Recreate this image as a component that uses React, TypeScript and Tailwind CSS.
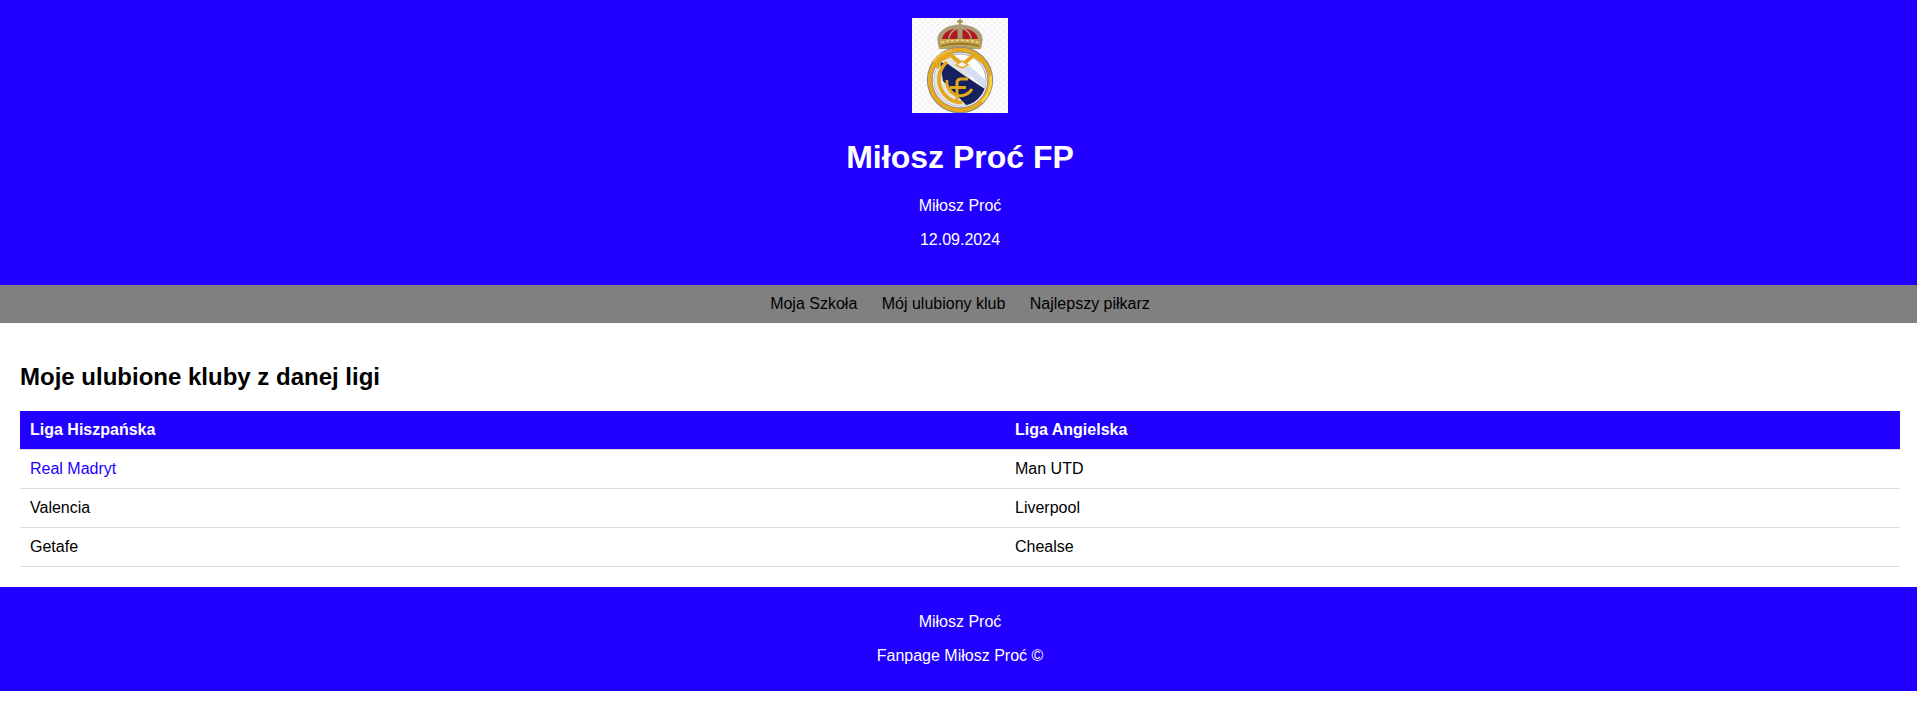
import React from "react";

function Logo() {
  return (
    <svg width="96" height="95" viewBox="0 0 96 95" className="block">
      <defs>
        <filter id="b" x="-5%" y="-5%" width="110%" height="110%"><feGaussianBlur stdDeviation="0.5" /></filter>
        <pattern id="chk" width="6" height="6" patternUnits="userSpaceOnUse">
          <rect width="6" height="6" fill="#fcfcfc" />
          <rect width="3" height="3" fill="#f4f4f4" />
          <rect x="3" y="3" width="3" height="3" fill="#f4f4f4" />
        </pattern>
        <clipPath id="inner"><circle cx="48" cy="62" r="26" /></clipPath>
      </defs>
      <rect width="96" height="95" fill="url(#chk)" />
      <g filter="url(#b)">
        {/* crown */}
        <path d="M48 1v6M45 3.5h6" stroke="#a98c4a" strokeWidth="1.8" fill="none" />
        <path d="M25.5 23 C24 13 36 6.5 48 6.5 C60 6.5 72 13 70.5 23 L69 31 H27 Z" fill="#a99c78" />
        <path d="M30 21 C31 15 37 11 45.5 10.5 V21 Z" fill="#b3161f" />
        <path d="M66 21 C65 15 59 11 50.5 10.5 V21 Z" fill="#b3161f" />
        <path d="M37 21 C37 16 41 12 46 10 M59 21 C59 16 55 12 50 10" fill="none" stroke="#b7a77c" strokeWidth="1.4" />
        <path d="M27.5 21 H68.5 L68 31 C56 27 40 27 28 31 Z" fill="#c9a53f" />
        <path d="M29 24.5 C41 21.5 55 21.5 67 24.5" fill="none" stroke="#e6d9a6" strokeWidth="1.6" strokeDasharray="3 2" />
        <path d="M29 28 C41 25 55 25 67 28" fill="none" stroke="#8f7436" strokeWidth="1.6" />
        <g fill="#7d8a8c">
          <circle cx="37" cy="20" r="1.1" /><circle cx="48" cy="19" r="1.2" /><circle cx="59" cy="20" r="1.1" />
        </g>
        {/* rim */}
        <circle cx="48" cy="62" r="33.2" fill="#8e8a80" />
        <circle cx="48" cy="62" r="32.2" fill="#e8a91f" />
        <path d="M78.5 58 A31 31 0 0 1 70 84" fill="none" stroke="#f7d739" strokeWidth="2.6" />
        <path d="M21 44 A31 31 0 0 1 40 32" fill="none" stroke="#efc04a" strokeWidth="2" />
        <circle cx="48" cy="62" r="28" fill="#f2f2f2" stroke="#8c8c92" strokeWidth="1" />
        <circle cx="48" cy="62" r="26" fill="#ffffff" stroke="#a8a8ae" strokeWidth="1" />
        {/* field */}
        <g clipPath="url(#inner)">
          <path d="M20 40 H48 L76 92 H10 Z" fill="#e4e4e4" />
          <path d="M28 44 L36 46 L53 58 L73 71 L68 82 L55 88 L31 63 Z" fill="#14235f" />
          <path d="M50 50 L58 48 L78 66 L74 72 Z" fill="#d6deef" />
        </g>
        {/* M */}
        <path d="M25 50 L28 42 L39 37 L50 47 L62 37 L71 44" fill="none" stroke="#e3a81e" strokeWidth="4" strokeLinejoin="round" />
        <path d="M44 47 L50 43 L56 47 L50 50 Z" fill="#f2f2f2" stroke="#e3a81e" strokeWidth="1.5" />
        {/* C */}
        <path d="M35 44 A23 23 0 0 0 50 84.5" fill="none" stroke="#e4a71f" strokeWidth="3.6" />
        <path d="M35 62 A13.5 13.5 0 0 0 60 71" fill="none" stroke="#e6a91f" strokeWidth="2.8" />
        {/* F */}
        <path d="M45 82 V65 Q45 61 49 61 H56 M38 69.5 H54" fill="none" stroke="#e2a51e" strokeWidth="3" />
      </g>
    </svg>
  );
}

export default function App() {
  const rows: [string, string][] = [
    ["Valencia", "Liverpool"],
    ["Getafe", "Chealse"],
  ];
  return (
    <div className="w-full overflow-hidden">
      <div className="min-h-[707px] w-[1920px] bg-white text-base leading-[18px] text-black font-['Liberation_Sans',Arial,sans-serif]">
        <header className="flex flex-col items-center bg-[#2200ff] pt-[18px] pb-5 text-white">
          <Logo />
          <h1 className="mt-[26px] mb-[21px] text-[32px] leading-[37px] font-bold">Miłosz Proć FP</h1>
          <p>Miłosz Proć</p>
          <p className="mt-4 mb-4">12.09.2024</p>
        </header>
        <nav className="flex justify-center gap-[24.45px] bg-[#808080] p-2.5">
          <a href="#">Moja Szkoła</a>
          <a href="#">Mój ulubiony klub</a>
          <a href="#">Najlepszy piłkarz</a>
        </nav>
        <main className="p-5">
          <h2 className="mt-5 mb-5 text-2xl leading-[28px] font-bold">Moje ulubione kluby z danej ligi</h2>
          <table className="w-full table-fixed border-separate border-spacing-0">
            <colgroup>
              <col className="w-[985px]" />
              <col />
            </colgroup>
            <thead>
              <tr className="bg-[#2200ff] text-white">
                <th className="h-[39px] border-b border-[#dddddd] px-2.5 text-left font-bold">Liga Hiszpańska</th>
                <th className="h-[39px] border-b border-[#dddddd] px-2.5 text-left font-bold">Liga Angielska</th>
              </tr>
            </thead>
            <tbody>
              <tr>
                <td className="h-[39px] border-b border-[#dddddd] px-2.5"><a href="#" className="text-[#2200ff]">Real Madryt</a></td>
                <td className="h-[39px] border-b border-[#dddddd] px-2.5">Man UTD</td>
              </tr>
              {rows.map(([a, b]) => (
                <tr key={a}>
                  <td className="h-[39px] border-b border-[#dddddd] px-2.5">{a}</td>
                  <td className="h-[39px] border-b border-[#dddddd] px-2.5">{b}</td>
                </tr>
              ))}
            </tbody>
          </table>
        </main>
        <footer className="bg-[#2200ff] py-2.5 text-center text-white">
          <p className="my-4">Miłosz Proć</p>
          <p className="my-4">Fanpage Miłosz Proć ©</p>
        </footer>
      </div>
    </div>
  );
}
